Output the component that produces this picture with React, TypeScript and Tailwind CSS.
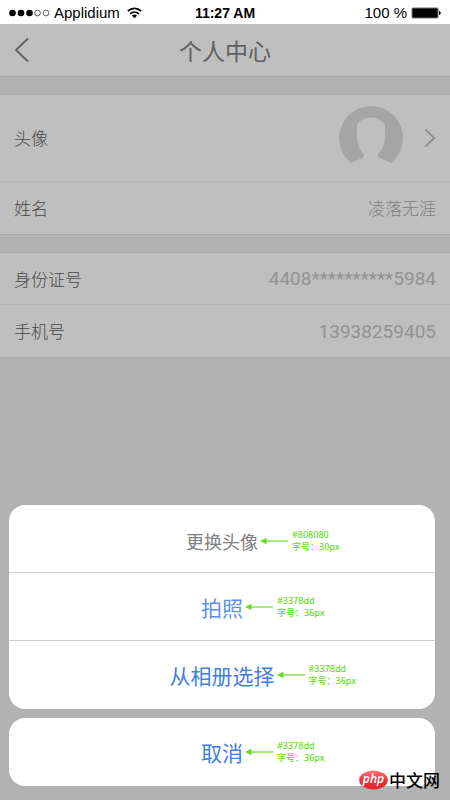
import type { ReactNode } from "react";

const cjk = "font-['Noto_Sans_CJK_SC',sans-serif]";

function StatusBar() {
  return (
    <div className="grid h-6 grid-cols-[1fr_auto_1fr] items-center bg-white pl-[9px] pr-[9px] pt-[2px] font-['Liberation_Sans',sans-serif] text-black">
      <div className="flex items-center">
        <svg width="42" height="8" viewBox="0 0 42 8" aria-hidden="true">
          <circle cx="3.5" cy="4" r="3.3" />
          <circle cx="12" cy="4" r="3.3" />
          <circle cx="20.5" cy="4" r="3.3" />
          <circle cx="28.5" cy="4" r="2.9" fill="none" stroke="#222" strokeWidth="0.7" />
          <circle cx="37" cy="4" r="2.9" fill="none" stroke="#222" strokeWidth="0.7" />
        </svg>
        <span className="ml-[3px] text-[15px] font-normal leading-5">Applidium</span>
        <svg className="ml-[7px]" width="15" height="12" viewBox="0 0 15 12" aria-hidden="true">
          <path d="M0.8 4.2C4.7 0.5 10.3 0.5 14.2 4.2" fill="none" stroke="#000" strokeWidth="1.8" />
          <path d="M3.1 6.8C5.7 4.4 9.3 4.4 11.9 6.8" fill="none" stroke="#000" strokeWidth="1.7" />
          <path d="M4.9 8.5C6.5 7.2 8.5 7.2 10.1 8.5L7.5 11.3Z" />
        </svg>
      </div>
      <span className="text-sm font-bold leading-5">11:27 AM</span>
      <div className="flex items-center justify-end gap-1">
        <span className="text-[15px] font-normal leading-5">100 %</span>
        <svg width="30" height="12" viewBox="0 0 30 12" aria-hidden="true">
          <rect x="0.5" y="0.5" width="27" height="11" rx="1.5" fill="#777" />
          <rect x="1.5" y="1.5" width="25" height="9" rx="0.5" fill="#000" />
          <path d="M28 4C30.3 4.3 30.3 7.7 28 8Z" />
        </svg>
      </div>
    </div>
  );
}

function Row({ label, children, tall, last }: { label: string; children: ReactNode; tall?: boolean; last?: boolean }) {
  return (
    <div
      className={`flex items-center justify-between px-[14px] ${tall ? "h-[87px]" : "h-[52px]"} ${last ? "" : "border-b border-[#b5b5b5]"}`}
    >
      <dt className="text-[17px] leading-6 text-[#484848]">{label}</dt>
      <dd className="text-[#808080]">{children}</dd>
    </div>
  );
}

function Group({ children }: { children: ReactNode }) {
  return <dl className="mt-[17px] border-y border-[#a9a9a9] bg-[#bfbfbf]">{children}</dl>;
}

function Note({ color, size }: { color: string; size: string }) {
  return (
    <span className="absolute left-full top-1/2 flex -translate-y-1/2 items-center gap-1 pl-[2px] text-left font-['Noto_Sans','Noto_Sans_CJK_SC',sans-serif] text-[9px] leading-3 text-[#66dd22]">
      <svg className="shrink-0" width="28" height="8" viewBox="0 0 28 8" aria-hidden="true">
        <path d="M0 4L6.5 0.8V7.2Z" fill="#66dd22" />
        <path d="M6 4H28" stroke="#66dd22" strokeWidth="1.2" />
      </svg>
      <span className="flex flex-col whitespace-nowrap font-medium">
        <span>{color}</span>
        <span>字号：{size}</span>
      </span>
    </span>
  );
}

function Action({ text, faded }: { text: string; faded?: boolean }) {
  return (
    <button type="button" className="flex h-[68px] w-full items-center justify-center">
      <span className={`relative text-[21px] font-normal leading-8 ${faded ? "text-[#5a92e6]" : "text-[#3f80e0]"}`}>
        {text}
        <Note color="#3378dd" size="36px" />
      </span>
    </button>
  );
}

function Watermark() {
  return (
    <div className="absolute bottom-[10px] right-[10px] flex items-center gap-px">
      <svg width="29" height="20" viewBox="0 0 29 20" aria-hidden="true">
        <defs>
          <linearGradient id="badge" x1="0" y1="0" x2="0" y2="1">
            <stop offset="0" stopColor="#f77" />
            <stop offset="0.5" stopColor="#f0303a" />
            <stop offset="1" stopColor="#e8252f" />
          </linearGradient>
        </defs>
        <ellipse cx="14.5" cy="10" rx="14.3" ry="9.5" fill="url(#badge)" />
        <text x="14.5" y="13" textAnchor="middle" fill="#fff" fontFamily="Noto Sans, sans-serif" fontSize="12" fontStyle="italic" fontWeight="600">
          php
        </text>
      </svg>
      <span className="text-[17px] font-medium leading-5 text-black">中文网</span>
    </div>
  );
}

export default function App() {
  return (
    <div className={`relative flex min-h-screen flex-col bg-[#b2b2b2] font-light ${cjk}`}>
      <StatusBar />
      <header className="grid h-[53px] grid-cols-[1fr_auto_1fr] items-center border-b border-[#a9a9a9] bg-[#bfbfbf] px-[14px]">
        <button type="button" aria-label="返回" className="w-4">
          <svg width="16" height="26" viewBox="0 0 16 26" fill="none" stroke="#606060" strokeWidth="1.8">
            <path d="M14 1.5L2 13L14 24.5" />
          </svg>
        </button>
        <h1 className="text-[23px] font-normal leading-8 text-[#606060]">个人中心</h1>
      </header>

      <Group>
        <Row label="头像" tall>
          <button type="button" aria-label="更换头像" className="flex items-center gap-[21px]">
            <svg width="64" height="64" viewBox="0 0 64 64" fill="#a5a5a5">
              <path d="M12 57A32 32 0 1 1 52 57L40 51.5C38.5 50.5 38.3 49 39.2 47.8C44 43 46 38 46 30V19C43 14 38 11.5 32 11.5C26 11.5 21 14 18 19V30C18 38 20 43 24.3 47.8C25.2 49 25.2 50.5 24 51.5Z" />
            </svg>
            <svg width="12" height="20" viewBox="0 0 12 20" fill="none" stroke="#888" strokeWidth="1.7">
              <path d="M1.5 1.5L10 10L1.5 18.5" />
            </svg>
          </button>
        </Row>
        <Row label="姓名" last>
          <span className="text-[17px] leading-6">凌落无涯</span>
        </Row>
      </Group>

      <Group>
        <Row label="身份证号">
          <span className="font-[Roboto,sans-serif] text-[19px] font-normal leading-6 text-[#929292]">4408**********5984</span>
        </Row>
        <Row label="手机号" last>
          <span className="font-[Roboto,sans-serif] text-[19px] font-normal leading-6 text-[#929292]">13938259405</span>
        </Row>
      </Group>

      <div className="mb-[14px] ml-[9px] mr-[15px] mt-auto pt-6">
        <section className="divide-y divide-[#cfcfcf] rounded-2xl bg-white">
          <div className="flex h-[68px] items-center justify-center pt-[4px]">
            <h2 className="relative text-lg font-normal leading-7 text-[#808080]">
              更换头像
              <Note color="#808080" size="30px" />
            </h2>
          </div>
          <Action text="拍照" faded />
          <Action text="从相册选择" />
        </section>
        <div className="mt-[9px] rounded-2xl bg-white">
          <Action text="取消" />
        </div>
      </div>
      <Watermark />
    </div>
  );
}
